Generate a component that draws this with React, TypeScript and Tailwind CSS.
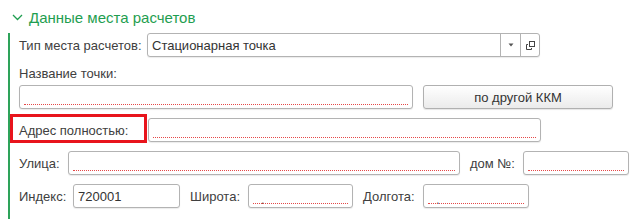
import React from 'react';

const FONT = { fontFamily: '"Liberation Sans", Arial, sans-serif' };

function Field({ w, text, dot, req = true, children }: { w: string; text?: string; dot?: boolean; req?: boolean; children?: React.ReactNode }) {
  return (
    <div
      className={`relative shrink-0 ${w} h-[24px] flex items-center border border-[#b3b3b3] rounded-[3px] bg-white shadow-[0_1px_1px_rgba(0,0,0,0.08)]`}
    >
      <div className="flex-1 pl-[4px] text-[13px] text-[#333] leading-none">
        {text}
        {dot && <span className="pl-[8px] relative top-[3px]">.</span>}
      </div>
      {children}
      {req && (
        <div className="absolute left-[4px] right-[4px] bottom-[3px] border-b border-dotted border-[#e54848]" />
      )}
    </div>
  );
}

function Label({ w, children }: { w: string; children: React.ReactNode }) {
  return <div className={`${w} shrink-0 whitespace-nowrap text-[13px] text-[#404040] leading-none`}>{children}</div>;
}

export default function App() {
  return (
    <div className="w-[640px] h-[219px] bg-white overflow-hidden relative" style={FONT}>
      {/* header */}
      <div className="h-[32px] flex items-center pl-[12px] pt-[2px]">
        <svg width="11" height="7" viewBox="0 0 11 7" className="mr-[6px]">
          <path d="M1 1 L5.5 5.5 L10 1" fill="none" stroke="#1f9e50" strokeWidth="1.3" />
        </svg>
        <span className="text-[15px] text-[#1f9e50] leading-none">Данные места расчетов</span>
      </div>

      <div className="ml-[8px] border-l-2 border-[#2ea35a] pl-[9px] h-[187px]">
        {/* row 1 */}
        <div className="flex items-center mt-[1px]">
          <Label w="w-[128px]">Тип места расчетов:</Label>
          <Field w="w-[393px]" text="Стационарная точка" req={false}>
            <div className="w-[20px] h-full border-l border-[#b3b3b3] flex items-center justify-center">
              <svg width="6" height="4" viewBox="0 0 6 4">
                <path d="M0.5 0.5 L5.5 0.5 L3 3.5 Z" fill="#555" />
              </svg>
            </div>
            <div className="w-[19px] h-full border-l border-[#b3b3b3] flex items-center justify-center">
              <svg width="9" height="9" viewBox="0 0 9 9">
                <rect x="3.5" y="0.5" width="5" height="5" fill="none" stroke="#444" strokeWidth="1" />
                <path d="M2 3.5 H0.5 V8.5 H5.5 V7" fill="none" stroke="#444" strokeWidth="1" />
              </svg>
            </div>
          </Field>
        </div>

        {/* row 2 */}
        <div className="mt-[8px] h-[16px] flex items-center">
          <Label w="w-auto">Название точки:</Label>
        </div>
        <div className="flex items-center mt-[4px]">
          <Field w="w-[394px]" />
          <button className="ml-[10px] w-[190px] h-[24px] border border-[#b0b0b0] rounded-[3px] bg-gradient-to-b from-white to-[#ebebeb] text-[13px] text-[#333] leading-none shadow-[0_1px_1px_rgba(0,0,0,0.1)]">
            по другой ККМ
          </button>
        </div>

        {/* row 3 */}
        <div className="flex items-center mt-[9px]">
          <Label w="w-[129px]">Адрес полностью:</Label>
          <Field w="w-[393px]" />
        </div>

        {/* row 4 */}
        <div className="flex items-center mt-[9px]">
          <Label w="w-[49px]">Улица:</Label>
          <Field w="w-[392px]" />
          <Label w="w-[63px] pl-[10px]">дом №:</Label>
          <Field w="w-[106px]" />
        </div>

        {/* row 5 */}
        <div className="flex items-center mt-[9px]">
          <Label w="w-[54px]">Индекс:</Label>
          <Field w="w-[107px]" text="720001" req={false} />
          <Label w="w-[68px] pl-[10px]">Широта:</Label>
          <Field w="w-[105px]" dot />
          <Label w="w-[70px] pl-[10px]">Долгота:</Label>
          <Field w="w-[106px]" dot />
        </div>
      </div>

      {/* annotation frame */}
      <div className="absolute left-[10px] top-[114px] w-[137px] h-[29px] border-[3px] border-[#e8141c]" />
    </div>
  );
}
